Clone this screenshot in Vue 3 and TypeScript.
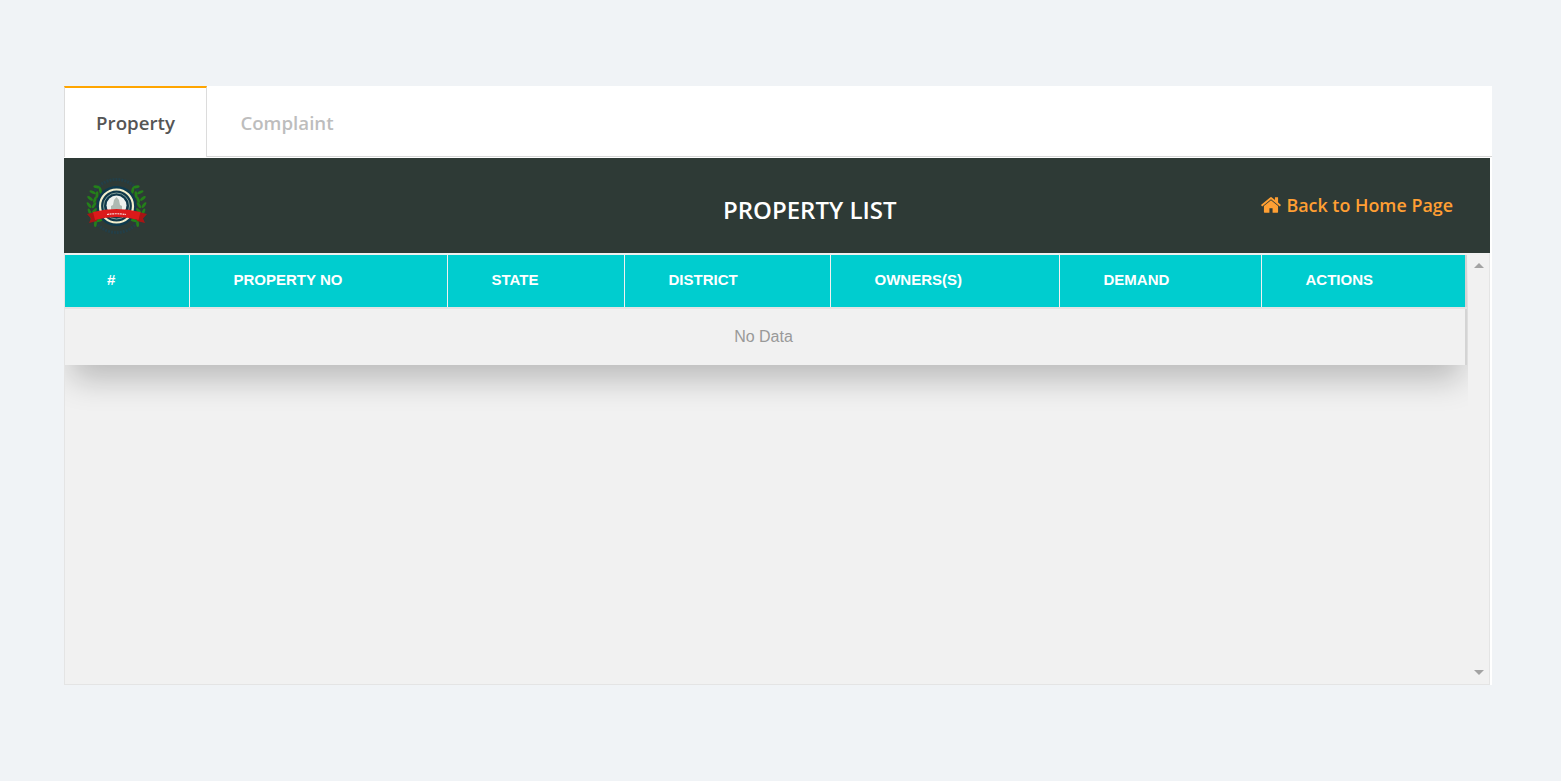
<template>
  <div class="page">
    <div class="panel">
      <div class="tabs">
        <button
          v-for="tab in tabs"
          :key="tab"
          class="tab"
          :class="{ active: tab === activeTab }"
          @click="activeTab = tab"
        >
          {{ tab }}
        </button>
      </div>

      <div class="list-head">
        <svg class="logo" viewBox="0 0 64 60" aria-hidden="true">
          <circle cx="31.500" cy="30" r="26.500" fill="none" stroke="#233f48" stroke-width="3" stroke-dasharray="2 1" />
          <rect x="0" y="16" width="12" height="28" fill="#2e3a36" />
          <rect x="51" y="16" width="13" height="28" fill="#2e3a36" />
          <g fill="#24801a">
            <ellipse
              v-for="leaf in leaves"
              :key="leaf.id"
              :cx="leaf.x"
              :cy="leaf.y"
              rx="3.400"
              ry="1.400"
              :transform="`rotate(${leaf.r} ${leaf.x} ${leaf.y})`"
            />
          </g>
          <circle cx="31.500" cy="30" r="20" fill="#0e3a4e" />
          <circle cx="31.500" cy="30" r="16.500" fill="#10384a" stroke="#f3eecb" stroke-width="2.200" />
          <circle cx="31.500" cy="30" r="13" fill="none" stroke="#7f9c96" stroke-width="1" />
          <circle cx="31.500" cy="29.500" r="10" fill="#eef1ee" />
          <path d="M26 36v-6l2-1 1-5 2.500-3 2.500 3 1 5 2 1v6z" fill="#aeb9b2" />
          <path d="M2 38l8-2 2 9-8 2 2-4.500zM62 38l-8-2-2 9 8 2-2-4.500z" fill="#a81414" />
          <path d="M8 36q12-3 23.500-3t24 3l-2 8q-11-3-22-3t-21.500 3z" fill="#dc1a1a" />
          <path d="M22 38.500q9.500-1.500 19 0" fill="none" stroke="#f6d6d6" stroke-width="1.200" stroke-dasharray="2 .6" />
        </svg>
        <h1 class="title">PROPERTY LIST</h1>
        <a class="home-link" href="#">
          <svg class="home-icon" viewBox="0 0 1792 1792" aria-hidden="true">
            <path d="M1472 992v480q0 26-19 45t-45 19h-384v-384h-256v384h-384q-26 0-45-19t-19-45v-480q0-1 .5-3t.5-3l575-474 575 474q1 2 1 6zm223-69l-62 74q-8 9-21 11h-3q-13 0-21-7l-692-577-692 577q-12 8-24 7-13-2-21-11l-62-74q-8-10-7-23.500t11-21.500l719-599q32-26 76-26t76 26l244 204v-195q0-14 9-23t23-9h192q14 0 23 9t9 23v408l219 182q10 8 11 21.500t-7 23.500z" />
          </svg>
          Back to Home Page
        </a>
      </div>

      <div class="scroll-box">
        <div class="table-clip">
          <table class="list-table">
            <colgroup>
              <col v-for="c in columns" :key="c.label" :style="{ width: c.width + 'px' }" />
            </colgroup>
            <thead>
              <tr>
                <th v-for="(c, i) in columns" :key="c.label" :class="{ first: i === 0 }">{{ c.label }}</th>
              </tr>
            </thead>
            <tbody>
              <tr>
                <td :colspan="columns.length" class="empty">No Data</td>
              </tr>
            </tbody>
          </table>
        </div>
        <div class="scrollbar">
          <span class="arrow up"></span>
          <span class="arrow down"></span>
        </div>
      </div>
    </div>
  </div>
</template>

<script setup lang="ts">
import { ref } from 'vue';

const tabs = ['Property', 'Complaint'];
const activeTab = ref('Property');

const columns = [
  { label: '#', width: 124 },
  { label: 'PROPERTY NO', width: 258 },
  { label: 'STATE', width: 177 },
  { label: 'DISTRICT', width: 206 },
  { label: 'OWNERS(S)', width: 229 },
  { label: 'DEMAND', width: 202 },
  { label: 'ACTIONS', width: 205 },
];

// laurel leaves: pairs along an arc on both sides of the badge
const leaves: { id: number; x: number; y: number; r: number }[] = [];
let leafId = 0;
for (const deg of [-44, -30, -16, -2, 12, 26, 40]) {
  const a = (deg * Math.PI) / 180;
  for (const [off, tilt] of [[2.5, -35], [-2.5, 35]]) {
    const r = 25 + off;
    const x = 31.5 - r * Math.cos(a);
    const y = 30 + r * Math.sin(a);
    const rot = deg + 90 + tilt;
    leaves.push({ id: leafId++, x, y, r: rot });
    leaves.push({ id: leafId++, x: 63 - x, y, r: -rot });
  }
}
</script>

<style scoped>
.page {
  padding: 86px 69px 96px 64px;
  font-family: "Open Sans", "Noto Sans", sans-serif;
}

.panel {
  background: #fff;
  height: 599px;
  display: flex;
  flex-direction: column;
}

.tabs {
  display: flex;
  flex: none;
  height: 71px;
  margin-bottom: 1px;
  border-bottom: 1px solid #d8d8d8;
  box-sizing: border-box;
}

.tab {
  width: 160px;
  height: 70px;
  padding: 1px 0 0;
  background: #fff;
  border: none;
  border-top: 2px solid transparent;
  font-family: inherit;
  font-size: 18.700px;
  font-weight: 600;
  color: #bdbdbd;
  cursor: pointer;
}

.tab.active {
  width: 143px;
  height: 71px;
  padding-top: 0;
  border-top-color: #ffa500;
  border-left: 1px solid #dcdcdc;
  border-right: 1px solid #dcdcdc;
  color: #555;
}

.list-head {
  flex: none;
  height: 95px;
  margin-right: 2px;
  background: #2e3a36;
  display: flex;
  align-items: center;
  padding: 0 37px 0 21px;
}

.logo {
  width: 64px;
  height: 60px;
  flex: none;
}

.title {
  margin: 8px 0 0 574px;
  font-size: 24px;
  font-weight: 600;
  color: #fff;
}

.home-link {
  margin-left: auto;
  margin-top: -1px;
  display: flex;
  align-items: center;
  gap: 4px;
  font-size: 17.900px;
  font-weight: 600;
  color: #ff9f33;
  text-decoration: none;
}

.home-icon {
  width: 22px;
  height: 22px;
  fill: currentColor;
}

.scroll-box {
  flex: 1;
  margin-right: 2px;
  min-height: 0;
  display: flex;
  background: #f1f1f1;
  border: 1px solid #e4e4e4;
  border-top: none;
}

.table-clip {
  width: 1403px;
  flex: none;
  overflow: hidden;
}

.list-table {
  width: 1401px;
  margin-top: 2px;
  table-layout: fixed;
  border-collapse: collapse;
  font-family: "Liberation Sans", Arial, sans-serif;
  background: #f1f1f1;
  border-right: 2px solid #d4d4d4;
  box-shadow: 0 20px 32px -6px rgba(0, 0, 0, 0.23);
}

.list-table th {
  height: 53px;
  padding: 0 0 3px 44px;
  background: #00cdcf;
  border-left: 1px solid #f1f1f1;
  border-bottom: 2px solid #e4e4e4;
  box-sizing: border-box;
  color: #fff;
  font-size: 15px;
  font-weight: 700;
  text-align: left;
}

.list-table th.first {
  padding-left: 42px;
  border-left: none;
}

.empty {
  height: 56px;
  padding: 0 3px 0 0;
  text-align: center;
  font-size: 16px;
  color: #999;
}

.scrollbar {
  flex: 1;
  position: relative;
}

.arrow {
  position: absolute;
  left: 6px;
  width: 0;
  height: 0;
  border-left: 5px solid transparent;
  border-right: 5px solid transparent;
}

.arrow.up {
  top: 10px;
  border-bottom: 5px solid #a3a3a3;
}

.arrow.down {
  bottom: 9px;
  border-top: 5px solid #a3a3a3;
}
</style>

<style>
html,
body {
  background: #f0f3f6;
}
</style>
